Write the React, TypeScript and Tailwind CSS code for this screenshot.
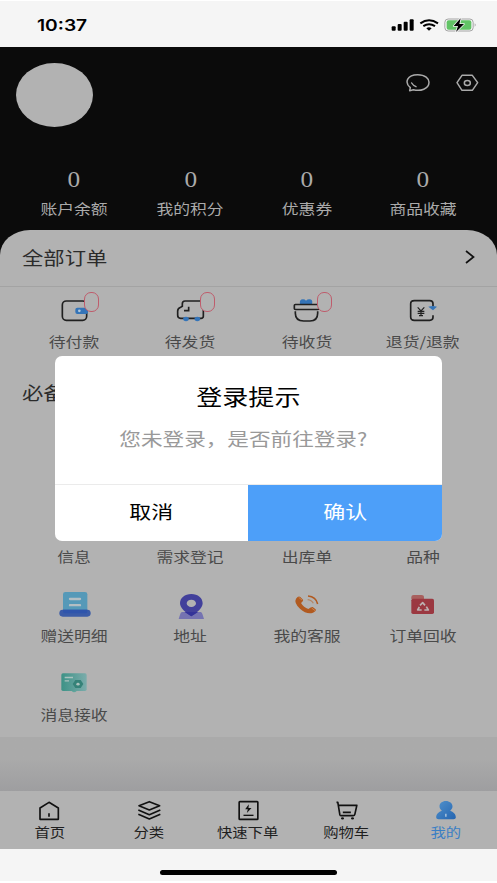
import type { ReactNode } from 'react'

const ink = '#202020'
const blue = '#3474b8'

function Wide({ children, className = '' }: { children: ReactNode; className?: string }) {
  return <span className={`inline-block whitespace-nowrap scale-x-[1.2] ${className}`}>{children}</span>
}

function StatusBar() {
  return (
    <div className="flex h-[47px] items-center justify-between border-t border-white bg-[#f5f5f5] pr-[20px] pl-[37px]">
      <Wide className="origin-left pt-[2px] font-['Inter'] text-[16px] leading-5 font-semibold text-black">10:37</Wide>
      <svg className="mt-[2px]" width="86" height="16" viewBox="432 50 258 48" fill="none">
        <g fill="#000">
          <rect x="434" y="78" width="12" height="13" rx="3" />
          <rect x="452" y="71" width="12" height="20" rx="3" />
          <rect x="470" y="64" width="12" height="27" rx="3" />
          <rect x="488" y="57" width="12" height="34" rx="3" />
          <path d="M538 84q8-6 16 0l-8 7z" />
        </g>
        <path d="M520 69q26-19 53 0M529 77.500q17-12 35 0" stroke="#000" strokeWidth="6" />
        <rect x="593.500" y="56" width="85" height="36" rx="10" stroke="#a4a4a4" strokeWidth="3" />
        <rect x="599" y="60" width="74" height="28" rx="6" fill="#62c466" />
        <path d="M683 69q6 5 0 10z" fill="#a4a4a4" />
        <path d="M641 54 620 77h13l-6 18 24-24h-14z" fill="#000" stroke="#f5f5f5" strokeWidth="5" strokeLinejoin="round" paintOrder="stroke" />
      </svg>
    </div>
  )
}

const stats = ['账户余额', '我的积分', '优惠券', '商品收藏']

function Header() {
  return (
    <header className="h-[183px] pt-[16px]">
      <div className="flex h-[64px] justify-between pr-[17px] pl-4">
        <div className="h-[64px] w-[77px] rounded-[50%] bg-[#b2b2b2]" />
        <svg className="mt-[9px]" width="75" height="22" viewBox="476 216 225 66" fill="none" stroke="#aaa" strokeWidth="4.500" strokeLinejoin="round">
          <path d="M492 263c-19-16-9-39 22-39 23 0 34 12 34 23 0 20-26 28-47 22l-11 3z" />
          <path d="M496 249q4 7 13 11" strokeLinecap="round" />
          <path d="M647 226h31l16 22-16 23h-31l-15-23z" />
          <ellipse cx="663" cy="249" rx="9" ry="7.500" />
        </svg>
      </div>
      <div className="mt-[39px] grid grid-cols-4 px-[16px]">
        {stats.map((label) => (
          <div key={label} className="flex flex-col items-center text-[#aaa]">
            <span className="inline-block scale-x-[1.1] font-['Liberation_Serif',serif] text-[23px] leading-7">0</span>
            <Wide className="mt-[4px] text-[14px] leading-5">{label}</Wide>
          </div>
        ))}
      </div>
    </header>
  )
}

function Badge() {
  return <i className="absolute top-[2px] left-[40px] h-[20px] w-[15px] rounded-[7px] border border-[#bf5c6c] bg-[#b2b2b2]" />
}

const orders: { label: string; badge?: boolean; icon: ReactNode }[] = [
  {
    label: '待付款',
    badge: true,
    icon: (
      <svg width="60" height="36" viewBox="132 30 180 108" fill="none">
        <rect x="187" y="63" width="73" height="58" rx="12" stroke={ink} strokeWidth="5" />
        <rect x="226" y="83" width="38" height="19" rx="6" fill={blue} />
        <circle cx="238" cy="92.500" r="4" fill="#b2c8dc" />
      </svg>
    ),
  },
  {
    label: '待发货',
    badge: true,
    icon: (
      <svg width="60" height="36" viewBox="481 30 180 108" fill="none">
        <path d="M611 75v34q0 6-7 6h-61q-9 0-9-9V93q0-8 9-11l5-3V71q0-8 8-8h47" stroke={ink} strokeWidth="5" />
        <path d="M567 80v12h-14" stroke={ink} strokeWidth="5" />
        <ellipse cx="559" cy="117" rx="8.500" ry="6.500" fill={blue} />
        <ellipse cx="593" cy="117" rx="8.500" ry="6.500" fill={blue} />
      </svg>
    ),
  },
  {
    label: '待收货',
    badge: true,
    icon: (
      <svg width="60" height="36" viewBox="89 30 180 108" fill="none">
        <path d="M158 73q-3-15 9-15 6 0 9 4 4-4 10-4 12 0 8 15z" fill={blue} />
        <rect x="141" y="73.500" width="74" height="15" rx="3" stroke={ink} strokeWidth="5" />
        <path d="M144 94v6q0 23 25 23h19q23 0 23-23v-6" stroke={ink} strokeWidth="5" />
      </svg>
    ),
  },
  {
    label: '退货/退款',
    icon: (
      <svg width="60" height="36" viewBox="438 30 180 108" fill="none">
        <path d="M558 79v-8q0-9-10-9h-46q-11 0-11 9v40q0 10 11 10h46q10 0 10-9v-6" stroke={ink} strokeWidth="5" />
        <path d="M544 80q13-4 26 0l-12 11z" fill={blue} />
        <path d="m512 82 10 11 10-11M522 93v14M512 94h20M512 100h20M516 107h12" stroke={ink} strokeWidth="3.500" />
      </svg>
    ),
  },
]

const services: { label: string; icon?: ReactNode }[] = [
  { label: '信息' },
  { label: '需求登记' },
  { label: '出库单' },
  { label: '品种' },
  {
    label: '赠送明细',
    icon: (
      <svg width="60" height="32" viewBox="132 39 180 96">
        <rect x="189" y="51" width="73" height="65" rx="7" fill="#5599b8" />
        <rect x="178" y="104" width="94" height="21" rx="10" fill="#3b5ca8" />
        <path d="M189 104h73v6q0 5-8 5h-57q-8 0-8-5z" fill="#2f55ac" />
        <path d="M210 72h30M210 90.500h30" stroke="#b3bec3" strokeWidth="7" strokeLinecap="round" />
      </svg>
    ),
  },
  {
    label: '地址',
    icon: (
      <svg width="60" height="32" viewBox="481 39 180 96">
        <path d="M547 111h56q4 0 6 8l4 13h-76l4-13q2-8 6-8z" fill="#7573b1" />
        <path fillRule="evenodd" d="M575 57c20 0 34 12 34 28 0 15-17 27-34 39-17-12-34-24-34-39 0-16 14-28 34-28zm0 17c-8 0-14 5-14 11s6 11 14 11 14-5 14-11-6-11-14-11z" fill="#42409b" />
        <path d="M555 111h40q-10 7-20 13-10-6-20-13z" fill="#343399" />
      </svg>
    ),
  },
  {
    label: '我的客服',
    icon: (
      <svg width="60" height="32" viewBox="89 39 180 96" fill="none">
        <path d="M146 71q7-9 13-5l8 8q2 3-6 10 8 14 22 18 9-7 13-6l9 7q3 5-8 10-19 6-39-12-19-18-12-30z" fill="#b15a20" />
        <path d="m154 67 10 8M193 99l10 8" stroke="#c9834f" strokeWidth="3" />
        <path d="M182 63q24 2 29 24" stroke="#b15a20" strokeWidth="4.500" />
        <path d="M181 74q12 1 17 11" stroke="#b38462" strokeWidth="3.500" />
      </svg>
    ),
  },
  {
    label: '订单回收',
    icon: (
      <svg width="60" height="32" viewBox="438 39 180 96" fill="none">
        <path d="M493 72v-6q0-6 7-6h23q8 0 8 7v7z" fill="#a8605e" />
        <rect x="493" y="71" width="68" height="46" rx="5" fill="#9b3841" />
        <path d="m519 91 8-8 7 8M538 95l6 10h-12M524 105h-12l5-9" stroke="#bdb1b2" strokeWidth="5" strokeLinejoin="round" />
      </svg>
    ),
  },
  {
    label: '消息接收',
    icon: (
      <svg width="60" height="32" viewBox="132 276 180 96">
        <defs>
          <linearGradient id="teal" x1="0" x2="1">
            <stop stopColor="#3d9286" />
            <stop offset="1" stopColor="#7bacab" />
          </linearGradient>
        </defs>
        <rect x="184" y="295" width="76" height="53" rx="5" fill="url(#teal)" />
        <path d="M215 348q7 8 15 0z" fill="#5fa59b" />
        <path d="M194 307.500h25M194 317.500h13" stroke="#a9c2be" strokeWidth="4" />
        <path d="m226 315h16l8 12-8 12h-16l-8-12z" fill="#358278" />
        <ellipse cx="234" cy="327.500" rx="5" ry="4" fill="#adc2bd" />
      </svg>
    ),
  },
]

function Orders() {
  return (
    <section>
      <div className="flex h-[57px] items-center justify-between border-b border-[#a3a3a3] pr-[21px] pb-[3px] pl-[22px]">
        <Wide className="origin-left text-[17.800px] leading-6 text-[#2b2b2b]">全部订单</Wide>
        <svg width="12" height="16" viewBox="0 0 12 16" fill="none" stroke="#111" strokeWidth="1.700">
          <path d="m2 2 7.500 6L2 14" />
        </svg>
      </div>
      <div className="grid grid-cols-4 px-[16px] pt-[3px]">
        {orders.map((o) => (
          <div key={o.label} className="flex flex-col items-center">
            <div className="relative h-[36px] w-[60px]">
              {o.icon}
              {o.badge && <Badge />}
            </div>
            <Wide className="mt-[5px] text-[14px] leading-5 text-[#4a4a4a]">{o.label}</Wide>
          </div>
        ))}
      </div>
    </section>
  )
}

function Services() {
  return (
    <section className="pt-[29px]">
      <h2 className="px-[22px] text-[17.800px] leading-6 text-[#2b2b2b]">
        <Wide className="origin-left">必备工具</Wide>
      </h2>
      <div className="mt-[103px] grid grid-cols-4 px-[16px]">
        {services.map((s) => (
          <div key={s.label} className="flex h-[79px] flex-col items-center pt-[2px]">
            <div className="h-[32px] w-[60px]">{s.icon}</div>
            <Wide className="mt-[5px] text-[14px] leading-5 text-[#4a4a4a]">{s.label}</Wide>
          </div>
        ))}
      </div>
    </section>
  )
}

const tabs: { label: string; icon: ReactNode }[] = [
  {
    label: '首页',
    icon: (
      <svg width="30" height="24" viewBox="104 57 90 72" fill="none" stroke="#111" strokeWidth="5" strokeLinejoin="round">
        <path d="M119 116V84l27-17 28 17v34h-55z" />
        <path d="M146 100v10" />
      </svg>
    ),
  },
  {
    label: '分类',
    icon: (
      <svg width="30" height="24" viewBox="402 57 90 72" fill="none" stroke="#111" strokeWidth="5" strokeLinejoin="round">
        <path d="m448 65 31 12-31 13-31-13zM415 90l33 14 33-14M415 103l33 14 33-14" />
      </svg>
    ),
  },
  {
    label: '快速下单',
    icon: (
      <svg width="30" height="24" viewBox="700.500 57 90 72" fill="none" stroke="#111" strokeWidth="5">
        <rect x="719" y="65" width="56" height="53" rx="2" />
        <path d="M732 106h30" strokeWidth="4" />
        <path d="m748 73-11 15h8l-3 11 14-15h-9z" fill="#111" stroke="none" />
      </svg>
    ),
  },
  {
    label: '购物车',
    icon: (
      <svg width="30" height="24" viewBox="256.500 57 90 72" fill="none" stroke="#111" strokeWidth="5" strokeLinejoin="round">
        <path d="M270 67h4l6 37q1 3 5 3h35q4 0 5-4l6-27h-54M289 97h24" />
        <ellipse cx="288" cy="115" rx="4.500" ry="3.500" fill="#111" stroke="none" />
        <ellipse cx="318" cy="115" rx="4.500" ry="3.500" fill="#111" stroke="none" />
      </svg>
    ),
  },
  {
    label: '我的',
    icon: (
      <svg width="30" height="24" viewBox="553.500 57 90 72">
        <defs>
          <linearGradient id="me" x1="0" y1="0" x2="1" y2="1">
            <stop stopColor="#5191cb" />
            <stop offset="1" stopColor="#2464b0" />
          </linearGradient>
        </defs>
        <path d="M598 63c11 0 20 7 20 16 0 6-3 10-7 13 9 3 17 10 17 20 0 4-3 6-7 6h-45c-4 0-7-2-7-6 0-10 8-17 17-20-4-3-7-7-7-13 0-9 8-16 19-16z" fill="url(#me)" />
        <path d="M598 101v9" stroke="#9dbbd9" strokeWidth="5" />
      </svg>
    ),
  },
]

function TabBar() {
  return (
    <nav className="grid h-[58px] grid-cols-5 bg-[#b2b2b2] pt-[8px] pr-[2px]">
      {tabs.map((t, i) => (
        <div key={t.label} className={`flex flex-col items-center ${i === 4 ? 'text-[#3b7fc4]' : 'text-[#1f1f1f]'}`}>
          {t.icon}
          <Wide className="text-[12.800px] leading-[18px]">{t.label}</Wide>
        </div>
      ))}
    </nav>
  )
}

function LoginDialog() {
  return (
    <div className="absolute top-[356px] left-[55px] flex h-[185px] w-[387px] flex-col overflow-hidden rounded-[7px] bg-white">
      <div className="flex flex-1 flex-col items-center pt-[24px]">
        <Wide className="text-[21.700px] leading-8 text-black">登录提示</Wide>
        <Wide className="mt-[14px] mr-[11px] text-[18px] leading-6 text-[#999]">您未登录，是否前往登录?</Wide>
      </div>
      <div className="grid h-[57px] grid-cols-[193px_194px] border-t border-[#ebebeb] text-[18.300px]">
        <button className="pb-[2px] text-black"><Wide>取消</Wide></button>
        <button className="bg-[#4d9ff9] pb-[2px] text-white"><Wide>确认</Wide></button>
      </div>
    </div>
  )
}

export default function App() {
  return (
    <div className="relative flex h-[883px] w-[497px] flex-col overflow-hidden bg-white font-['Noto_Sans_CJK_SC',sans-serif]">
      <StatusBar />
      <div className="bg-[#0b0b0b]">
        <Header />
        <main className="h-[507px] overflow-hidden rounded-t-[30px_25px] bg-[#b2b2b2]">
          <Orders />
          <Services />
        </main>
      </div>
      <div className="h-[54px] bg-linear-to-b from-[#aaa] from-40% to-[#9e9ea0]" />
      <TabBar />
      <div className="flex h-[32px] justify-center bg-[#f5f5f5] pt-[21px]">
        <div className="h-[5px] w-[177px] rounded-full bg-black" />
      </div>
      <LoginDialog />
    </div>
  )
}
